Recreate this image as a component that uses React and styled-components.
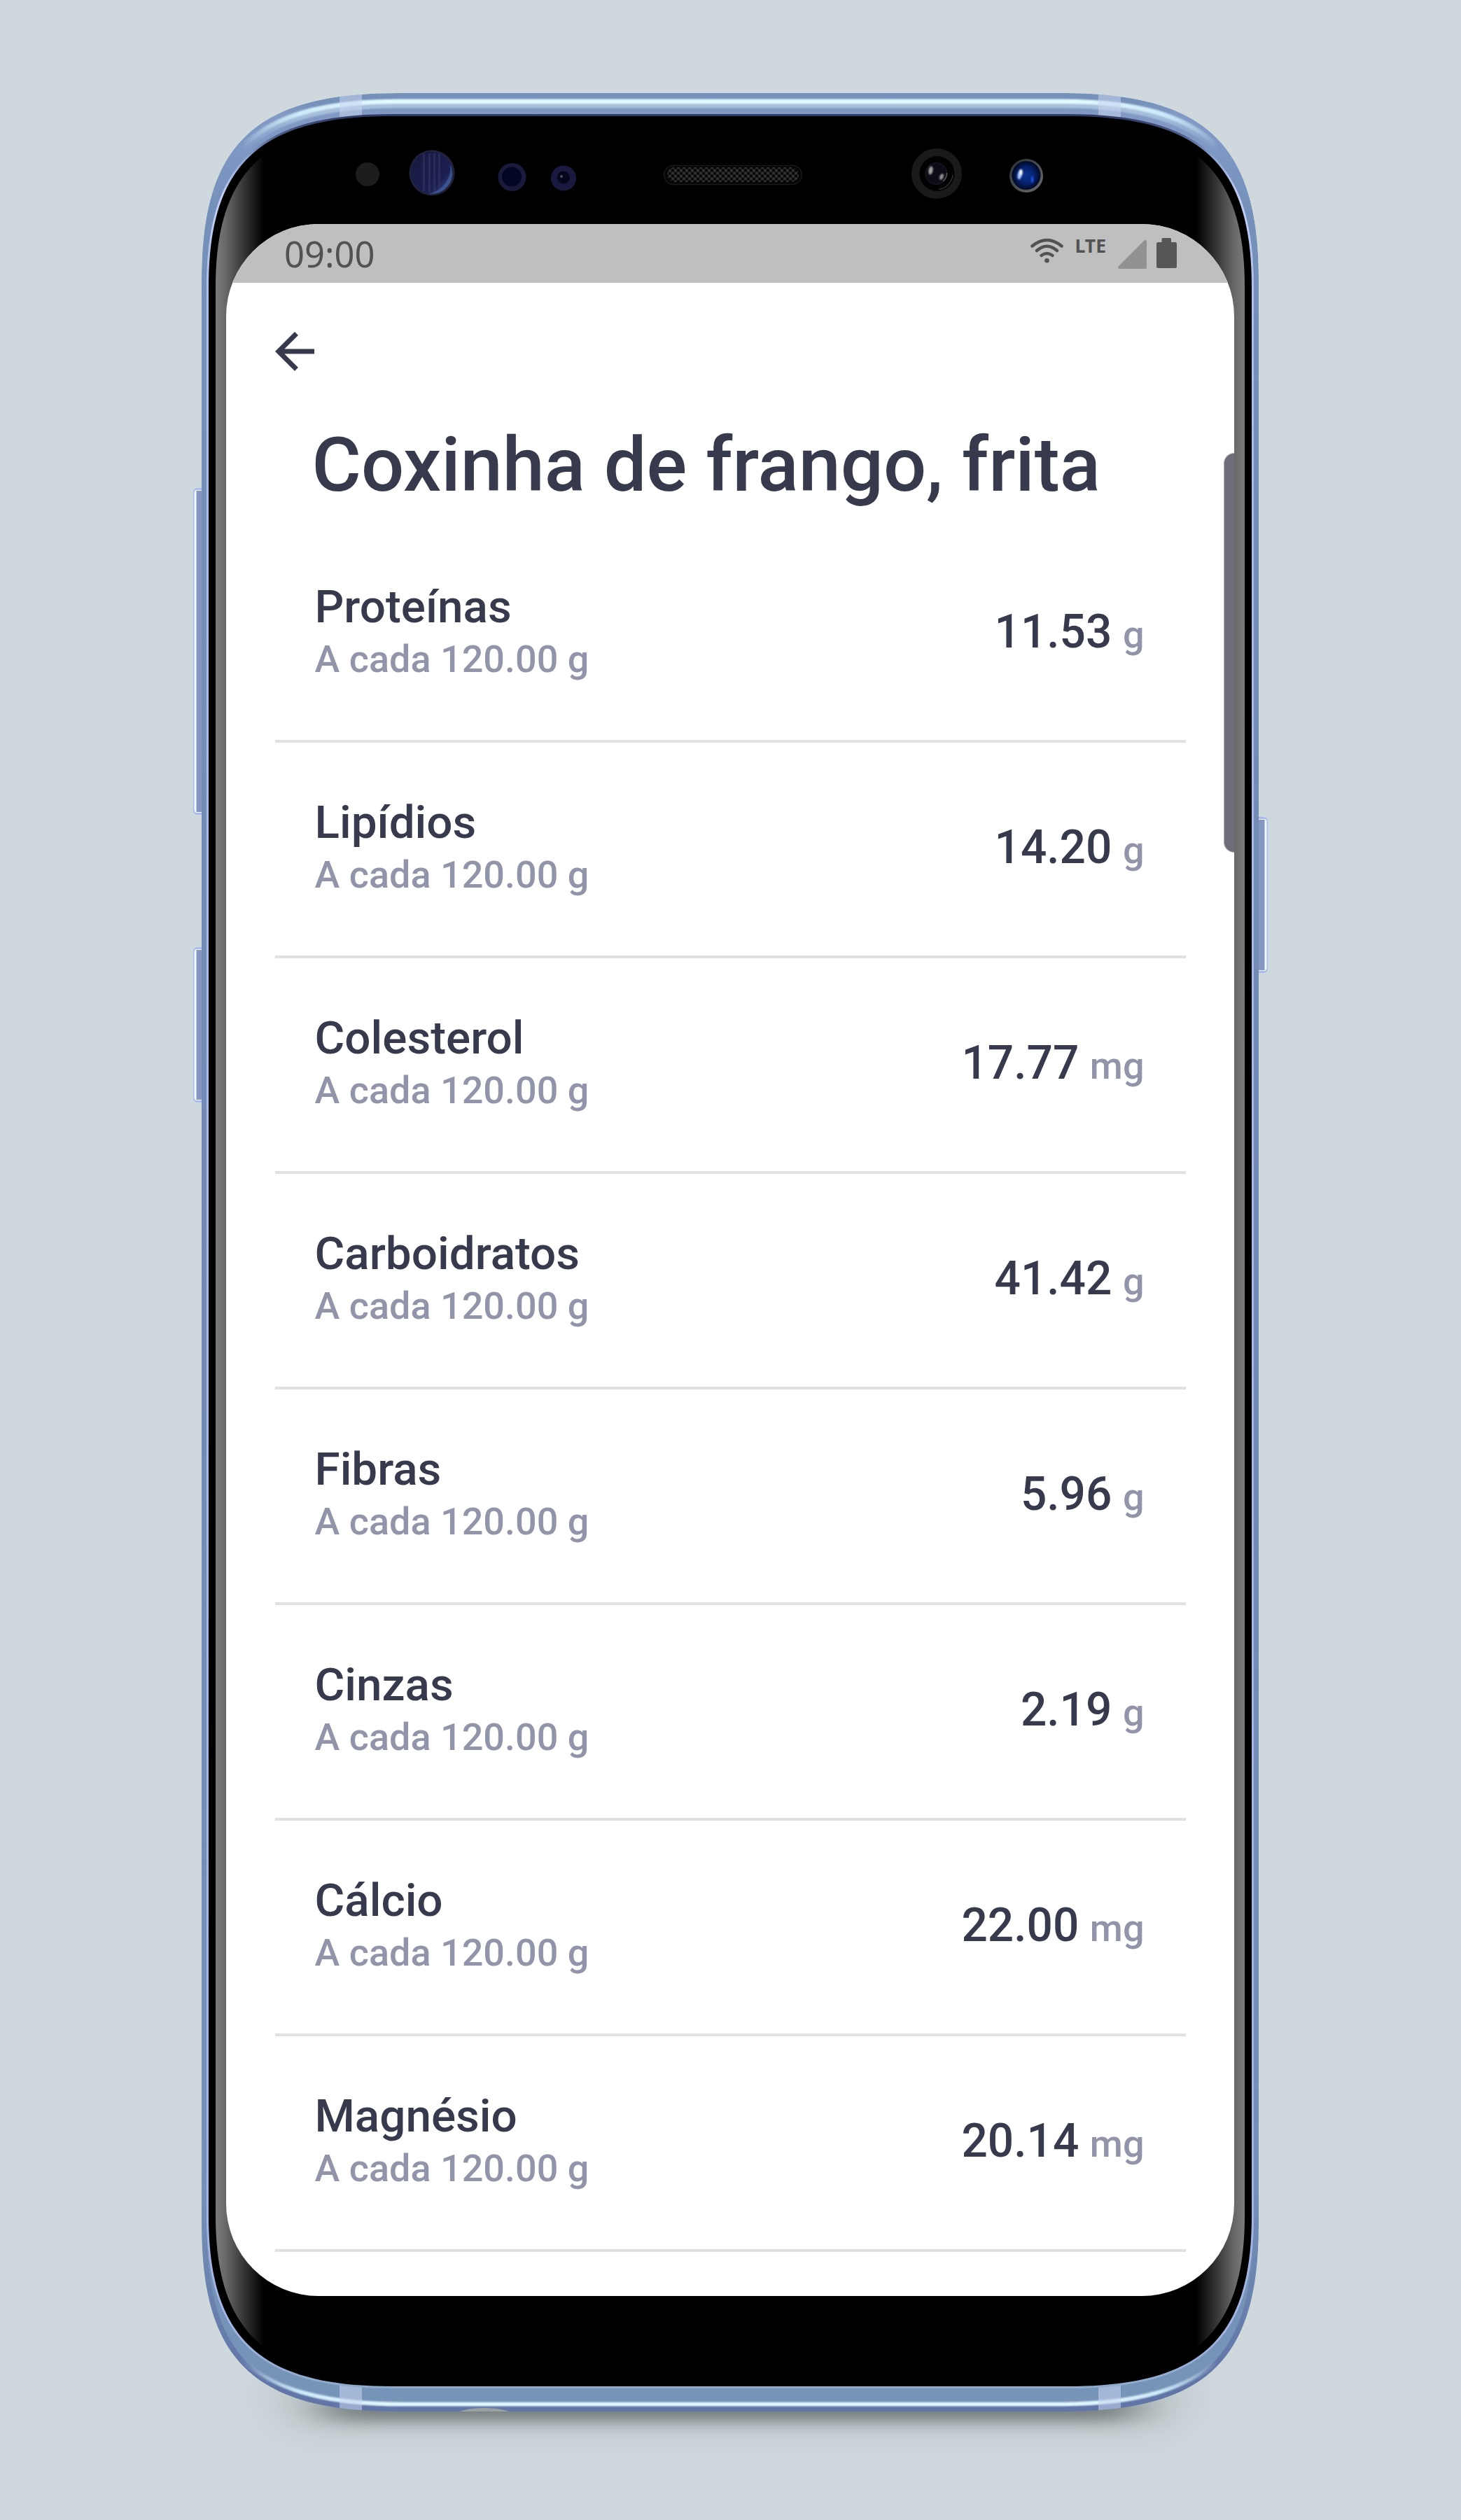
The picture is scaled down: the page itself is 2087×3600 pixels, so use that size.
import React from 'react';
import styled, { createGlobalStyle } from 'styled-components';

const GlobalStyle = createGlobalStyle`
  html, body { margin: 0; padding: 0; background: #cfd8dd; }
  *, *::before, *::after { box-sizing: border-box; }
`;

const Page = styled.main`
  width: 2087px;
  height: 3600px;
  padding: 133px 289px 0 288px;
  overflow: hidden;
  background: #cfd8dd;
  font-family: Roboto, 'Noto Sans', sans-serif;
`;

const Phone = styled.section`
  position: relative;
  width: 1510px;
  height: 3312px;
  padding: 187px 35px 165px;
`;

const Hardware = styled.svg`
  position: absolute;
  left: -288px;
  top: -133px;
  width: 2087px;
  height: 3600px;
  pointer-events: none;
`;

const Screen = styled.div`
  position: relative;
  display: flex;
  flex-direction: column;
  width: 1440px;
  height: 2960px;
  overflow: hidden;
  border-radius: 132px;
  background: #fff;
  color: #37394c;
`;

const EdgeHandle = styled.div`
  position: absolute;
  top: 327px;
  right: 0;
  width: 15px;
  height: 571px;
  border: 1px solid #b0afb6;
  border-right: 0;
  border-radius: 15px 0 0 15px;
  background: #6f6d79;
`;

const StatusBar = styled.header`
  display: flex;
  flex: none;
  justify-content: space-between;
  align-items: flex-start;
  height: 84px;
  padding: 0 82px 0 83px;
  background: #bfbfbf;
  color: #525252;
  font-family: 'Noto Sans', sans-serif;
`;

const Clock = styled.time`
  font-size: 50.7px;
  line-height: 85px;
`;

const StatusIcons = styled.div`
  display: flex;
  align-items: flex-start;
`;

const StatusGlyph = styled.svg`
  display: block;
  flex: none;
  width: ${(p) => p.$w}px;
  height: ${(p) => p.$h}px;
  margin: ${(p) => p.$top}px 0 0 ${(p) => p.$gap || 0}px;
`;

const NetworkLabel = styled.span`
  margin: 13px 0 0 17px;
  font-size: 26.5px;
  font-weight: 700;
  line-height: 37px;
`;

const Toolbar = styled.nav`
  display: flex;
  flex: none;
  align-items: flex-start;
  height: 197px;
  padding: 56px 56px 0;
`;

const BackButton = styled.button`
  display: block;
  width: 84px;
  height: 84px;
  padding: 0;
  border: 0;
  background: none;
  color: inherit;
  svg { display: block; width: 100%; height: 100%; }
`;

const Title = styled.h1`
  flex: none;
  margin: 0 0 26px;
  padding-left: 122.5px;
  font-size: 107.9px;
  font-weight: 500;
  line-height: 126px;
  white-space: nowrap;
`;

const NutrientList = styled.ul`
  flex: none;
  margin: 0;
  padding: 0 69px 0 70px;
  list-style: none;
`;

const NutrientRow = styled.li`
  display: flex;
  align-items: center;
  justify-content: space-between;
  height: 308px;
  padding: 0 59.5px 6px 56.5px;
  border-bottom: 4px solid #e1e1e1;
`;

const Label = styled.div`
  display: flex;
  flex-direction: column;
`;

const Name = styled.span`
  font-size: 65.6px;
  font-weight: 500;
  line-height: 78px;
`;

const Portion = styled.span`
  color: #9295a9;
  font-size: 54px;
  font-weight: 500;
  line-height: 71px;
`;

const Amount = styled.div`
  display: flex;
  align-items: baseline;
  gap: 15.5px;
  padding-top: 4px;
  font-size: 65.8px;
  font-weight: 500;
  line-height: 77px;
`;

const Unit = styled.span`
  color: #9295a9;
  font-size: 54px;
`;

const nutrients = [
  ['Proteínas', '11.53', 'g'],
  ['Lipídios', '14.20', 'g'],
  ['Colesterol', '17.77', 'mg'],
  ['Carboidratos', '41.42', 'g'],
  ['Fibras', '5.96', 'g'],
  ['Cinzas', '2.19', 'g'],
  ['Cálcio', '22.00', 'mg'],
  ['Magnésio', '20.14', 'mg'],
];

// Squircle outline: sy/sx are where the straight edges start, cy/cx the control offsets from the corner.
const shell = (l, t, r, b, sy, cy, cx, sx) =>
  `M${l} ${t + sy}C${l} ${t + cy} ${l + cx} ${t} ${l + sx} ${t}H${r - sx}` +
  `C${r - cx} ${t} ${r} ${t + cy} ${r} ${t + sy}V${b - sy}` +
  `C${r} ${b - cy} ${r - cx} ${b} ${r - sx} ${b}H${l + sx}` +
  `C${l + cx} ${b} ${l} ${b - cy} ${l} ${b - sy}Z`;

const OUTER = shell(288, 133, 1798, 3445, 267, 77, 72, 280);
const INNER = shell(298, 166, 1788, 3409, 244, 69, 72, 262);
const GLASS = shell(308, 176, 1778, 3399, 234, 70, 70, 252);

const HIGHLIGHT_TOP = 'M345 211C386 168 455 145 568 145H1518C1631 145 1700 168 1741 211';
const HIGHLIGHT_BOTTOM = 'M345 3372C390 3412 460 3434.500 575 3434.500H1511C1626 3434.500 1696 3412 1741 3372';

function SideKey({ x, y, h, flip }) {
  return (
    <g transform={`translate(${x} ${y})${flip ? ' scale(-1 1)' : ''}`}>
      <path d={`M13 0H7Q0 0 0 7V${h - 7}Q0 ${h} 7 ${h}H13Z`} fill="#a9baf0" />
      <path d={`M13 3H5Q1.500 3 1.500 8V${h - 8}Q1.500 ${h - 3} 5 ${h - 3}H13Z`} fill="#f0faff" />
      <rect x="4.500" y="4" width="8.500" height={h - 8} fill="#8597c0" />
    </g>
  );
}

function PhoneHardware() {
  return (
    <Hardware viewBox="0 0 2087 3600" aria-hidden="true">
      <defs>
        <clipPath id="body"><path d={OUTER} /></clipPath>
        <filter id="softWide" x="-20%" y="-200%" width="140%" height="500%"><feGaussianBlur stdDeviation="40 30" /></filter>
        <filter id="softTight" x="-20%" y="-300%" width="140%" height="700%"><feGaussianBlur stdDeviation="32 11" /></filter>
        <filter id="glint" filterUnits="userSpaceOnUse" x="288" y="100" width="1510" height="3400"><feGaussianBlur stdDeviation="1.200" /></filter>
        <filter id="lens"><feGaussianBlur stdDeviation="1" /></filter>
        <linearGradient id="ends" gradientUnits="userSpaceOnUse" x1="345" x2="1741" y1="0" y2="0">
          <stop offset="0" stopColor="#d8f2ff" stopOpacity="0" />
          <stop offset=".06" stopColor="#cfeaf9" />
          <stop offset=".15" stopColor="#e2faff" />
          <stop offset=".85" stopColor="#e2faff" />
          <stop offset=".94" stopColor="#cfeaf9" />
          <stop offset="1" stopColor="#d8f2ff" stopOpacity="0" />
        </linearGradient>
        <linearGradient id="rim" gradientUnits="userSpaceOnUse" x1="0" x2="0" y1="133" y2="3445">
          <stop offset="0" stopColor="#7591ba" />
          <stop offset=".004" stopColor="#7591ba" />
          <stop offset=".009" stopColor="#8299c4" />
          <stop offset=".025" stopColor="#7e97c4" />
          <stop offset=".05" stopColor="#7591b9" />
          <stop offset=".5" stopColor="#7189b4" />
          <stop offset="1" stopColor="#7693b8" />
        </linearGradient>
        <linearGradient id="innerLine" gradientUnits="userSpaceOnUse" x1="0" x2="0" y1="166" y2="3409">
          <stop offset="0" stopColor="#2f3b66" />
          <stop offset=".008" stopColor="#4c5c88" />
          <stop offset=".018" stopColor="#8ea4d2" />
          <stop offset=".035" stopColor="#c3d0f4" />
          <stop offset=".08" stopColor="#aebdea" />
          <stop offset=".93" stopColor="#a4b4e2" />
          <stop offset=".975" stopColor="#a3b6e2" />
          <stop offset="1" stopColor="#8faacb" />
        </linearGradient>
        <linearGradient id="underside" gradientUnits="userSpaceOnUse" x1="0" x2="0" y1="3130" y2="3400">
          <stop offset="0" stopColor="#6175a7" stopOpacity="0" />
          <stop offset="1" stopColor="#6175a7" />
        </linearGradient>
        <linearGradient id="glassShine" gradientUnits="userSpaceOnUse" x1="308" x2="1778" y1="0" y2="0">
          <stop offset="0" stopColor="#7c7c7b" />
          <stop offset=".0102" stopColor="#666" />
          <stop offset=".028" stopColor="#343434" />
          <stop offset=".047" stopColor="#000" />
          <stop offset=".953" stopColor="#000" />
          <stop offset=".972" stopColor="#343434" />
          <stop offset=".9898" stopColor="#686868" />
          <stop offset="1" stopColor="#7c7c7b" />
        </linearGradient>
        <linearGradient id="sensor" x1="0" y1="0" x2="1" y2="1">
          <stop offset="0" stopColor="#17193c" />
          <stop offset=".7" stopColor="#1c1f52" />
          <stop offset="1" stopColor="#3f5c9f" />
        </linearGradient>
        <radialGradient id="iris">
          <stop offset="0" stopColor="#0a3290" />
          <stop offset=".6" stopColor="#052069" />
          <stop offset="1" stopColor="#010820" />
        </radialGradient>
        <linearGradient id="irisRing" x1="0" y1="0" x2="1" y2="1">
          <stop offset="0" stopColor="#2d2f31" />
          <stop offset="1" stopColor="#686c70" />
        </linearGradient>
        <pattern id="mesh" patternUnits="userSpaceOnUse" x="955" y="237.500" width="8" height="8">
          <rect width="8" height="8" fill="#343434" />
          <circle cx="2" cy="2" r="2.400" fill="#050505" />
          <circle cx="6" cy="6" r="2.400" fill="#050505" />
        </pattern>
      </defs>

      <rect x="400" y="3385" width="1286" height="80" rx="40" fill="#838d86" opacity=".36" filter="url(#softWide)" />
      <rect x="465" y="3424" width="1156" height="34" rx="17" fill="#4e5556" opacity=".66" filter="url(#softTight)" />

      <SideKey x={276} y={697} h={467} />
      <SideKey x={276} y={1353} h={222} />
      <SideKey x={1811} y={1167} h={223} flip />

      <g clipPath="url(#body)">
        <path d={OUTER} fill="url(#rim)" />
        <path d={OUTER} fill="none" stroke="url(#underside)" strokeWidth="15" />
        <path d={HIGHLIGHT_TOP} fill="none" stroke="url(#ends)" strokeWidth="12" opacity=".45" filter="url(#glint)" transform="translate(0 3.500)" />
        <path d={HIGHLIGHT_TOP} fill="none" stroke="url(#ends)" strokeWidth="6.500" filter="url(#glint)" />
        <path d={HIGHLIGHT_BOTTOM} fill="none" stroke="url(#ends)" strokeWidth="5.500" filter="url(#glint)" />
        <g fill="#c9d6f0" opacity=".55">
          <rect x="485" y="133" width="32" height="34" />
          <rect x="1569" y="133" width="32" height="34" />
          <rect x="485" y="3405" width="32" height="40" />
          <rect x="1569" y="3405" width="32" height="40" />
        </g>
        <path d={INNER} fill="#000" stroke="url(#innerLine)" strokeWidth="6" />
        <path d={INNER} fill="#000" />
        <path d={GLASS} fill="url(#glassShine)" />
        <ellipse cx="691.500" cy="3449" rx="39" ry="9" fill="#9aa2a1" />
      </g>

      <circle cx="525" cy="249" r="17" fill="#1d1d1f" />
      <circle cx="617" cy="247" r="32.500" fill="#22233a" />
      <circle cx="616.500" cy="246.500" r="30" fill="url(#sensor)" />
      <g fill="#34335f" opacity=".65">
        <rect x="604" y="220" width="3" height="53" />
        <rect x="612" y="219" width="3" height="56" />
        <rect x="619" y="219" width="3" height="56" />
        <rect x="626" y="220" width="3" height="53" />
      </g>
      <path d="M643 234A30 30 0 0 1 612 277A38 38 0 0 0 643 234" fill="#41609f" opacity=".7" />
      <circle cx="731.500" cy="253" r="20" fill="#1a1a3d" />
      <circle cx="731" cy="252.500" r="14" fill="#040724" />
      <circle cx="805" cy="254.500" r="18" fill="#1a1a40" />
      <circle cx="805" cy="253.500" r="9" fill="#04061a" />
      <circle cx="802" cy="252" r="2" fill="#4a4a60" />

      <rect x="948.500" y="236.500" width="197" height="27" rx="13.500" fill="#060606" stroke="#191919" strokeWidth="1.500" />
      <rect x="953" y="239" width="188" height="21" rx="10.500" fill="url(#mesh)" />

      <circle cx="1338" cy="248" r="36" fill="#1a1a1a" />
      <circle cx="1338.500" cy="248" r="25" fill="#020202" />
      <circle cx="1337.500" cy="248" r="15.500" fill="#0f0b16" stroke="#1f1d24" />
      <path d="M1341 270.500A23 23 0 0 0 1361 250" fill="none" stroke="#323232" strokeWidth="1.500" />
      <path d="M1347 259A15 15 0 0 0 1352.500 247" fill="none" stroke="#555" strokeWidth="1.500" />
      <g filter="url(#lens)">
        <ellipse cx="1329.500" cy="243.500" rx="3" ry="6" fill="#a5a5a5" transform="rotate(10 1329.500 243.500)" />
        <ellipse cx="1345" cy="252.500" rx="2.500" ry="4.500" fill="#999" transform="rotate(20 1345 252.500)" />
      </g>

      <circle cx="1466" cy="251" r="24" fill="url(#irisRing)" />
      <circle cx="1466" cy="250.500" r="20.500" fill="url(#iris)" />
      <g filter="url(#lens)">
        <ellipse cx="1457" cy="249" rx="3.200" ry="7.500" fill="#a8c4ff" transform="rotate(14 1457 249)" />
        <ellipse cx="1458.500" cy="246" rx="2" ry="4" fill="#fff" />
        <ellipse cx="1474.500" cy="256.500" rx="2" ry="5" fill="#1c4fd6" />
      </g>
    </Hardware>
  );
}

export default function App() {
  return (
    <Page>
      <GlobalStyle />
      <Phone>
        <PhoneHardware />
        <Screen>
          <StatusBar>
            <Clock>09:00</Clock>
            <StatusIcons>
              <StatusGlyph $w={47} $h={36} $top={20} viewBox="0 0 47 36">
                <g fill="none" stroke="#525252" strokeWidth="4.500" strokeLinecap="round">
                  <path d="M2.500 11.500Q23.500 -5.500 44.500 11.500" />
                  <path d="M9 18Q23.500 5.500 38 18" />
                  <path d="M15.500 25Q23.500 19 31.500 25" />
                </g>
                <circle cx="23.500" cy="32.200" r="3.300" fill="#525252" />
              </StatusGlyph>
              <NetworkLabel>LTE</NetworkLabel>
              <StatusGlyph $w={41} $h={42} $top={22} $gap={17} viewBox="0 0 41 42">
                <path d="M37.500 1.500Q41 -.5 41 3V40Q41 42 39 42H2Q-1 42 .5 38.800Z" fill="#929292" />
              </StatusGlyph>
              <StatusGlyph $w={29} $h={43} $top={20} $gap={14} viewBox="0 0 29 43">
                <path d="M9 0H19.500Q21 0 21 1.500V6H26.500Q29 6 29 8.500V40.500Q29 43 26.500 43H2.500Q0 43 0 40.500V8.500Q0 6 2.500 6H7.500V1.500Q7.500 0 9 0Z" fill="#565656" />
              </StatusGlyph>
            </StatusIcons>
          </StatusBar>
          <Toolbar>
            <BackButton aria-label="Voltar">
              <svg viewBox="0 0 24 24">
                <path d="M20 11H7.830l5.590-5.590L12 4l-8 8 8 8 1.410-1.410L7.830 13H20z" fill="currentColor" />
              </svg>
            </BackButton>
          </Toolbar>
          <Title>Coxinha de frango, frita</Title>
          <NutrientList>
            {nutrients.map(([name, value, unit]) => (
              <NutrientRow key={name}>
                <Label>
                  <Name>{name}</Name>
                  <Portion>A cada 120.00 g</Portion>
                </Label>
                <Amount>
                  {value}
                  <Unit>{unit}</Unit>
                </Amount>
              </NutrientRow>
            ))}
          </NutrientList>
          <EdgeHandle />
        </Screen>
      </Phone>
    </Page>
  );
}
